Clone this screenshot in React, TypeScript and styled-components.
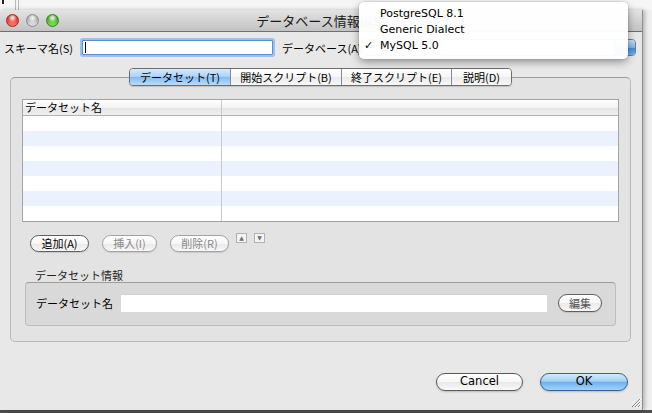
import React from "react";
import styled, { createGlobalStyle } from "styled-components";

const JP = `"Noto Sans CJK JP", "DejaVu Sans", sans-serif`;
const UI = `"DejaVu Sans", "Noto Sans CJK JP", sans-serif`;

const GlobalStyle = createGlobalStyle`
  html, body {
    margin: 0;
    padding: 0;
  }
  body {
    width: 652px;
    height: 413px;
    overflow: hidden;
    background: #eeeeee;
    font-family: ${JP};
  }
`;

const Screen = styled.div`
  position: relative;
  width: 652px;
  height: 413px;
  overflow: hidden;
  display: flex;
  flex-direction: column;
  background: #efefef;
`;

// desktop bits peeking out behind the dialog
const BackStrip = styled.div`
  height: 10px;
  flex-shrink: 0;
  display: flex;
  align-items: flex-start;
  gap: 11px;
  padding-left: 2px;
  background: #f6f6f6;
`;

const BackTick = styled.div`
  width: 2px;
  height: 4px;
  background: #222;
`;

const BackLines = styled.div`
  width: 2px;
  height: 10px;
  border-left: 1px solid #b8b8b8;
  border-right: 1px solid #b8b8b8;
`;

const Middle = styled.div`
  display: flex;
  height: 400px;
  flex-shrink: 0;
`;

const RightBackdrop = styled.div`
  flex: 1;
  background: #f0f0f0;
`;

const BottomStrip = styled.div`
  flex: 1;
  background: #4e4e4e;
`;

const Window = styled.div`
  width: 643px;
  flex-shrink: 0;
  display: flex;
  flex-direction: column;
  background: #e8e8e8;
  border-right: 1px solid #8e8e8e;
  box-shadow: 2px 0 4px rgba(0, 0, 0, 0.25);
  box-sizing: border-box;
  z-index: 1;
`;

const TitleBar = styled.div`
  height: 21px;
  flex-shrink: 0;
  display: grid;
  grid-template-columns: 1fr auto 1fr;
  align-items: center;
  background: linear-gradient(#e4e4e4, #cfcfcf 60%, #c3c3c3);
  border-bottom: 1px solid #6f6f6f;
`;

const Lights = styled.div`
  display: flex;
  gap: 7px;
  padding-left: 6px;
`;

const Light = styled.div<{ $c: string; $d: string }>`
  width: 13px;
  height: 13px;
  border-radius: 50%;
  box-sizing: border-box;
  border: 1px solid ${(p) => p.$d};
  background: radial-gradient(
      circle at 50% 25%,
      rgba(255, 255, 255, 0.95) 0,
      rgba(255, 255, 255, 0) 45%
    ),
    radial-gradient(circle at 50% 85%, ${(p) => p.$c} 20%, ${(p) => p.$d} 100%);
`;

const Title = styled.div`
  font: 13px/1 ${JP};
  color: #1a1a1a;
  white-space: nowrap;
`;

const Body = styled.div`
  flex: 1;
  display: flex;
  flex-direction: column;
  padding-top: 6px;
`;

const FormRow = styled.div`
  height: 19px;
  display: flex;
  align-items: center;
  padding-left: 4px;
`;

const Label = styled.div<{ $w?: number }>`
  ${(p) => (p.$w ? `width: ${p.$w}px; flex-shrink: 0;` : "")}
  font: 11px/14px ${JP};
  color: #000;
  white-space: nowrap;
`;

const FocusInput = styled.div`
  width: 191px;
  height: 15px;
  box-sizing: border-box;
  display: flex;
  align-items: center;
  padding-left: 2px;
  background: #fff;
  border: 1px solid #5a8ed0;
  box-shadow: 0 0 0 2px #9cc2ee;
  border-radius: 1px;
`;

const Caret = styled.div`
  width: 1px;
  height: 11px;
  background: #000;
`;

const PopupButton = styled.div`
  flex: 1;
  height: 17px;
  margin-right: 6px;
  display: flex;
  justify-content: flex-end;
  box-sizing: border-box;
  border: 1px solid #7b7b7b;
  border-radius: 4px;
  overflow: hidden;
  background: linear-gradient(#ffffff, #ededed);
`;

const PopupArrow = styled.div`
  width: 20px;
  background: linear-gradient(#c5e0fa, #7bb6f0 50%, #3f8ae0 52%, #6fb3f5);
  border-left: 1px solid #3d6bab;
`;

const TabArea = styled.div`
  margin: 11px 11px 0 10px;
  display: flex;
  flex-direction: column;
`;

const TabBar = styled.div`
  position: relative;
  z-index: 1;
  align-self: center;
  display: flex;
  height: 18px;
  margin-bottom: -9px;
  box-sizing: border-box;
  border: 1px solid #6d6d6d;
  border-radius: 4px;
  overflow: hidden;
  box-shadow: 0 1px 1px rgba(0, 0, 0, 0.15);
`;

const Tab = styled.div<{ $w: number; $active?: boolean }>`
  width: ${(p) => p.$w}px;
  display: flex;
  align-items: center;
  justify-content: center;
  box-sizing: border-box;
  font: 11px/1 ${JP};
  color: #000;
  white-space: nowrap;
  & + & {
    border-left: 1px solid #8a8a8a;
  }
  background: ${(p) =>
    p.$active
      ? "linear-gradient(#d8ebfd, #a9d0f7 50%, #84bcf3 52%, #b7dcfc)"
      : "linear-gradient(#ffffff, #f6f6f6 50%, #ebebeb 52%, #f7f7f7)"};
`;

const TabBox = styled.div`
  border: 1px solid #b9b9b9;
  border-top-color: #9c9c9c;
  border-radius: 5px;
  background: #e3e3e3;
  padding: 21px 11px 15px;
`;

const Table = styled.div`
  border: 1px solid #a3a3a3;
  background: #fff;
`;

const TableRow = styled.div<{ $stripe?: boolean }>`
  display: grid;
  grid-template-columns: 199px 1fr;
  height: 15px;
  background: ${(p) => (p.$stripe ? "#ecf2fd" : "#ffffff")};
`;

const HeaderRow = styled.div`
  display: grid;
  grid-template-columns: 199px 1fr;
  height: 15px;
  border-bottom: 1px solid #b4b4b4;
  background: linear-gradient(#ffffff, #f3f3f3 50%, #e6e6e6 52%, #efefef);
`;

const Cell = styled.div<{ $first?: boolean }>`
  ${(p) => (p.$first ? "border-right: 1px solid #c9c9c9;" : "")}
  padding-left: 2px;
  font: 11px/15px ${JP};
  color: #000;
  white-space: nowrap;
`;

const ButtonRow = styled.div`
  display: flex;
  align-items: flex-start;
  margin-top: 13px;
  padding-left: 8px;
  height: 17px;
`;

const PillButton = styled.div<{ $w: number; $dim?: boolean; $gap?: number }>`
  width: ${(p) => p.$w}px;
  height: 17px;
  margin-right: ${(p) => p.$gap ?? 0}px;
  box-sizing: border-box;
  display: flex;
  align-items: center;
  justify-content: center;
  border-radius: 9px;
  border: 1px solid ${(p) => (p.$dim ? "#a2a2a2" : "#5f5f5f")};
  background: linear-gradient(#ffffff, #f7f7f7 50%, #e9e9e9 52%, #f9f9f9);
  box-shadow: 0 1px 1px rgba(0, 0, 0, 0.12);
  font: 11px/1 ${JP};
  color: ${(p) => (p.$dim ? "#8a8a8a" : "#000")};
  white-space: nowrap;
`;

const ArrowButton = styled.div`
  width: 11px;
  height: 10px;
  margin: -2px 7px 0 0;
  box-sizing: border-box;
  display: flex;
  align-items: center;
  justify-content: center;
  border: 1px solid #b2b2b2;
  background: #f4f4f4;
  font: 6px/1 ${UI};
  color: #6f6f6f;
`;

const GroupLabel = styled.div`
  margin-top: 16px;
  padding-left: 13px;
  height: 14px;
  font: 11px/14px ${JP};
  color: #1f1f1f;
`;

const GroupBox = styled.div`
  margin: 0 3px;
  height: 44px;
  box-sizing: border-box;
  display: flex;
  align-items: flex-start;
  padding: 11px 13px 0 10px;
  border: 1px solid #bdbdbd;
  border-top-color: #9d9d9d;
  border-radius: 4px;
  background: #d9d9d9;
`;

const GroupField = styled.div`
  flex: 1;
  height: 18px;
  margin: 0 11px 0 8px;
  background: #fff;
  border-top: 1px solid #cfcfcf;
  box-sizing: border-box;
`;

const GroupRowLabel = styled.div`
  font: 11px/18px ${JP};
  color: #000;
  white-space: nowrap;
`;

const Footer = styled.div`
  display: flex;
  justify-content: flex-end;
  gap: 17px;
  margin-top: 31px;
  padding-right: 14px;
`;

const AquaButton = styled.div<{ $w: number; $blue?: boolean }>`
  width: ${(p) => p.$w}px;
  height: 18px;
  box-sizing: border-box;
  display: flex;
  align-items: center;
  justify-content: center;
  border-radius: 9px;
  border: 1px solid ${(p) => (p.$blue ? "#3f5f97" : "#5c5c5c")};
  background: ${(p) =>
    p.$blue
      ? "linear-gradient(#d6ebfd, #a4cff6 45%, #6fb2f0 52%, #9fd3fb)"
      : "linear-gradient(#ffffff, #f7f7f7 50%, #e8e8e8 52%, #fafafa)"};
  box-shadow: 0 1px 2px rgba(0, 0, 0, 0.2);
  font: 11.5px/1 ${UI};
  color: #000;
`;

const GripRow = styled.div`
  margin-top: auto;
  display: flex;
  justify-content: flex-end;
  padding: 0 1px 2px 0;
`;

const Menu = styled.div`
  position: absolute;
  left: 359px;
  top: 2px;
  width: 269px;
  padding: 4px 0 5px;
  z-index: 5;
  background: rgba(255, 255, 255, 0.97);
  border-radius: 5px;
  box-shadow: 0 3px 9px rgba(0, 0, 0, 0.38), 0 0 0 1px rgba(0, 0, 0, 0.06);
`;

const MenuItem = styled.div`
  display: grid;
  grid-template-columns: 21px 1fr;
  height: 16px;
  align-items: center;
  font: 11px/16px ${UI};
  color: #000;
`;

const Check = styled.span`
  padding-left: 5px;
  font: 11px/16px ${UI};
`;

const tabs = [
  { label: "データセット(T)", w: 100, active: true },
  { label: "開始スクリプト(B)", w: 111 },
  { label: "終了スクリプト(E)", w: 110 },
  { label: "説明(D)", w: 60 },
];

const dbOptions = [
  { name: "PostgreSQL 8.1" },
  { name: "Generic Dialect" },
  { name: "MySQL 5.0", checked: true },
];

const App = () => {
  return (
    <Screen>
      <GlobalStyle />
      <BackStrip>
        <BackTick />
        <BackLines />
      </BackStrip>
      <Middle>
        <Window>
          <TitleBar>
            <Lights>
              <Light $c="#ff6b5f" $d="#b0241c" />
              <Light $c="#d8d8d8" $d="#8f8f8f" />
              <Light $c="#74d64c" $d="#2f8a1c" />
            </Lights>
            <Title>データベース情報編集</Title>
            <div />
          </TitleBar>
          <Body>
            <FormRow>
              <Label $w={78}>スキーマ名(S)</Label>
              <FocusInput>
                <Caret />
              </FocusInput>
              <Label $w={79} style={{ marginLeft: 9 }}>
                データベース(A)
              </Label>
              <PopupButton>
                <PopupArrow />
              </PopupButton>
            </FormRow>

            <TabArea>
              <TabBar>
                {tabs.map((t) => (
                  <Tab key={t.label} $w={t.w} $active={t.active}>
                    {t.label}
                  </Tab>
                ))}
              </TabBar>
              <TabBox>
                <Table>
                  <HeaderRow>
                    <Cell $first>データセット名</Cell>
                    <Cell />
                  </HeaderRow>
                  {Array.from({ length: 7 }).map((_, i) => (
                    <TableRow key={i} $stripe={i % 2 === 1}>
                      <Cell $first />
                      <Cell />
                    </TableRow>
                  ))}
                </Table>

                <ButtonRow>
                  <PillButton $w={59} $gap={13}>
                    追加(A)
                  </PillButton>
                  <PillButton $w={55} $gap={13} $dim>
                    挿入(I)
                  </PillButton>
                  <PillButton $w={59} $gap={7} $dim>
                    削除(R)
                  </PillButton>
                  <ArrowButton>▲</ArrowButton>
                  <ArrowButton>▼</ArrowButton>
                </ButtonRow>

                <GroupLabel>データセット情報</GroupLabel>
                <GroupBox>
                  <GroupRowLabel>データセット名</GroupRowLabel>
                  <GroupField />
                  <PillButton $w={44} style={{ height: 18 }}>
                    <span style={{ color: "#555" }}>編集</span>
                  </PillButton>
                </GroupBox>
              </TabBox>
            </TabArea>

            <Footer>
              <AquaButton $w={87}>Cancel</AquaButton>
              <AquaButton $w={88} $blue>
                OK
              </AquaButton>
            </Footer>

            <GripRow>
              <svg width="11" height="11" viewBox="0 0 11 11">
                <path
                  d="M10 2 L2 10 M10 5 L5 10 M10 8 L8 10"
                  stroke="#8a8a8a"
                  strokeWidth="1"
                />
                <path
                  d="M11 2 L3 10 M11 5 L6 10 M11 8 L9 10"
                  stroke="#ffffff"
                  strokeWidth="1"
                />
              </svg>
            </GripRow>
          </Body>
        </Window>
        <RightBackdrop />
      </Middle>
      <BottomStrip />

      <Menu>
        {dbOptions.map((o) => (
          <MenuItem key={o.name}>
            <Check>{o.checked ? "✓" : ""}</Check>
            <span>{o.name}</span>
          </MenuItem>
        ))}
      </Menu>
    </Screen>
  );
};

export default App;
